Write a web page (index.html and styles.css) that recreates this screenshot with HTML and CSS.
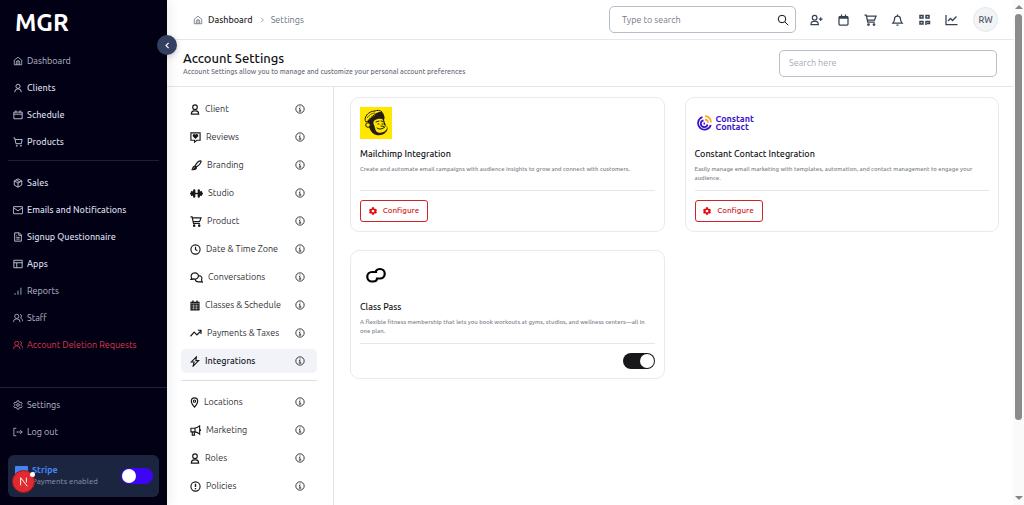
FILE: index.html
```html
<!DOCTYPE html>
<html lang="en">
<head>
<meta charset="utf-8">
<meta name="viewport" content="width=device-width, initial-scale=1">
<title>Account Settings</title>
<link rel="stylesheet" href="styles.css">
</head>
<body>
<svg class="sprite" aria-hidden="true">
  <defs>
    <symbol id="home" viewBox="0 0 24 24"><path d="M3 10l9-7 9 7v11H3zM8 21v-6a4 4 0 0 1 8 0v6M12 12v9"/></symbol>
    <symbol id="person" viewBox="0 0 24 24"><circle cx="12" cy="8" r="5"/><path d="M20 22a8 8 0 0 0-16 0"/></symbol>
    <symbol id="cal" viewBox="0 0 24 24"><path d="M2 5h20v16H2zM2 10h20M7 1v5M17 1v5"/></symbol>
    <symbol id="cart" viewBox="0 0 24 24"><circle cx="9" cy="21" r="1.3"/><circle cx="19" cy="21" r="1.3"/><path d="M1 2h3l3 14h13l2-10H5"/></symbol>
    <symbol id="box" viewBox="0 0 24 24"><path d="M12 2l9 5v10l-9 5-9-5V7zM3 7l9 5 9-5M12 12v10M7.500 4.500l9 5"/></symbol>
    <symbol id="mail" viewBox="0 0 24 24"><rect x="1" y="4" width="22" height="17" rx="1"/><path d="M2 7l10 7 10-7"/></symbol>
    <symbol id="doc" viewBox="0 0 24 24"><path d="M4 2h11l5 5v15H4zM14 2v6h6M8 9h2M8 13h8M8 17h8"/></symbol>
    <symbol id="layout" viewBox="0 0 24 24"><path d="M2 3h20v18H2zM2 9h20M9 9v12"/></symbol>
    <symbol id="bars" viewBox="0 0 24 24"><path d="M5 21v-4M12 21V11M19 21V4"/></symbol>
    <symbol id="people" viewBox="0 0 24 24"><circle cx="9" cy="8" r="5"/><path d="M1 22a8 8 0 0 1 16 0M17 3a5 5 0 0 1 1 9c3 1 5 4 5 8"/></symbol>
    <symbol id="gear" viewBox="0 0 24 24"><path d="M10 2h4l.8 3 2 1.200 3-.9 2 3.500-2.200 2.200v2l2.200 2.200-2 3.500-3-.9-2 1.200-.8 3h-4l-.8-3-2-1.200-3 .9-2-3.500L4.400 13v-2L2.200 8.800l2-3.500 3 .9 2-1.200z"/><circle cx="12" cy="12" r="3.200"/></symbol>
    <symbol id="logout" viewBox="0 0 24 24"><path d="M8 3H2v18h6M8 12h14M17 7l5 5-5 5"/></symbol>
    <symbol id="chevron-left" viewBox="0 0 24 24"><path d="M15 5l-7 7 7 7"/></symbol>
    <symbol id="chevron-right" viewBox="0 0 24 24"><path d="M9 5l7 7-7 7"/></symbol>
    <symbol id="search" viewBox="0 0 24 24"><circle cx="10" cy="10" r="7.500"/><path d="M16 16l6.500 6.500"/></symbol>
    <symbol id="info" viewBox="0 0 24 24"><circle cx="12" cy="12" r="10"/><path d="M9.500 11H12v6M9 17h6M12 6v2.500"/></symbol>
    <symbol id="user-plus" viewBox="0 0 28 24"><circle cx="10" cy="7" r="5"/><path d="M2 22c0-5 3-7 6-7h4c3 0 6 2 6 7zM23 6v8M19 10h8"/></symbol>
    <symbol id="calendar-o" viewBox="0 0 24 24"><rect x="3" y="5" width="18" height="17" rx="2"/><path d="M3 7h18" stroke-width="5"/><path d="M8 1v4M16 1v4"/></symbol>
    <symbol id="fa-cart" viewBox="0 0 26 24"><path d="M1 2h3.500l3 14h14M5 4h19l-3 8H7"/><circle cx="9" cy="21" r="1.500"/><circle cx="20" cy="21" r="1.500"/></symbol>
    <symbol id="bell" viewBox="0 0 24 24"><path d="M12 1v3M3 18c2-2 3-4 3-8a6 6 0 0 1 12 0c0 4 1 6 3 8zM10 22h4"/></symbol>
    <symbol id="qr" viewBox="0 0 24 24"><path stroke-width="3" d="M3 3h6v5H3zM15 3h6v5h-6zM3 15h6v5H3zM15 22v-7h7v4h-5"/></symbol>
    <symbol id="chart" viewBox="0 0 26 24"><path d="M2 2v19h23M6 14l5-5 4 4 8-8"/></symbol>
    <symbol id="fa-user" viewBox="0 0 20 24"><circle cx="10" cy="7" r="5"/><path d="M2 22c0-5 3-7 6-7h4c3 0 6 2 6 7z"/></symbol>
    <symbol id="review" viewBox="0 0 24 24"><path d="M2 2h20v16h-7l-5 4v-4H2z"/><path class="solid" d="M12 15L6 9c-1-4 4-6 6-3 2-3 7-1 6 3z"/></symbol>
    <symbol id="brush" viewBox="0 0 24 24"><path d="M10 13C14 5 19 2 22 2s0 8-9 13z"/><path class="solid" d="M10 12l4 4c1 5-5 8-13 6 4-2 1-9 9-10z"/><path class="hole" d="M5 20c3-1 2-5 5-5"/></symbol>
    <symbol id="dumbbell" viewBox="0 0 28 24"><path stroke-width="5" stroke-linecap="round" d="M9 5v14M19 5v14M4 9v6M24 9v6"/><path stroke-width="3" d="M0 12h28"/></symbol>
    <symbol id="clock" viewBox="0 0 24 24"><circle cx="12" cy="12" r="10"/><path d="M12 6v6l4 3"/></symbol>
    <symbol id="chat" viewBox="0 0 28 24"><path d="M2 16c1-1 2-2 1-4C1 7 4 2 10 2s9 4 8 8-6 7-11 5c-2 1-3 1-5 1zM19 8c6 0 8 5 6 9 0 2 1 4 2 5-2 0-4 0-5-1-5 1-10 0-11-5"/></symbol>
    <symbol id="cal-grid" viewBox="0 0 20 24"><path class="solid" d="M0 4h20v19H0zM4 1h3v4H4zM13 1h3v4h-3z"/><path class="hole" d="M1 8h18M2 13h16M2 18h16M7 10v11M13 10v11"/></symbol>
    <symbol id="trend" viewBox="0 0 26 24"><path d="M1 18l8-9 6 6 9-9M17 5h7v8"/></symbol>
    <symbol id="bolt" viewBox="0 0 20 24"><path d="M13 2L2 13h6l-2 9 12-12h-6z"/></symbol>
    <symbol id="pin" viewBox="0 0 18 24"><path d="M9 22C4 16 2 13 2 9a7 7 0 0 1 14 0c0 4-2 7-7 13z"/><circle cx="9" cy="9" r="2.500"/></symbol>
    <symbol id="horn" viewBox="0 0 24 24"><path d="M21 2v18c-4-4-7-5-12-5H2V7h7c5 0 8-1 12-5zM11 7v8M5 15v7h5l-1-7M23 9v4"/></symbol>
    <symbol id="policy" viewBox="0 0 24 24"><circle cx="12" cy="12" r="10"/><path stroke-width="3" d="M12 6v7M12 15v3"/></symbol>
    <symbol id="cog-solid" viewBox="0 0 24 24"><path class="solid" fill-rule="evenodd" d="M9 1h6l1 4 1.500 1L21 5l3 5-3 2.500L24 15l-3 5-4-1-1 .8-1 3.200H9l-1-3.200L7 19l-4 1-3-5 3-2.500L0 10l3-5 3.500 1L8 5zM12 8a4 4 0 1 0 .01 0z"/></symbol>
  </defs>
</svg>

<div class="app">
  <aside class="sidebar">
    <div class="brand">MGR</div>
    <nav class="menu" aria-label="Primary">
      <a href="#"><svg class="icon"><use href="#home"/></svg>Dashboard</a>
      <a href="#" class="strong"><svg class="icon"><use href="#person"/></svg>Clients</a>
      <a href="#" class="strong"><svg class="icon"><use href="#cal"/></svg>Schedule</a>
      <a href="#" class="strong"><svg class="icon"><use href="#cart"/></svg>Products</a>
    </nav>
    <nav class="menu menu-second" aria-label="Business">
      <a href="#" class="strong"><svg class="icon"><use href="#box"/></svg>Sales</a>
      <a href="#" class="strong"><svg class="icon"><use href="#mail"/></svg>Emails and Notifications</a>
      <a href="#" class="strong"><svg class="icon"><use href="#doc"/></svg>Signup Questionnaire</a>
      <a href="#" class="strong"><svg class="icon"><use href="#layout"/></svg>Apps</a>
      <a href="#"><svg class="icon"><use href="#bars"/></svg>Reports</a>
      <a href="#"><svg class="icon"><use href="#people"/></svg>Staff</a>
      <a href="#" class="danger"><svg class="icon"><use href="#people"/></svg>Account Deletion Requests</a>
    </nav>
    <nav class="menu menu-foot" aria-label="Account">
      <a href="#"><svg class="icon"><use href="#gear"/></svg>Settings</a>
      <a href="#"><svg class="icon"><use href="#logout"/></svg>Log out</a>
    </nav>
    <div class="stripe">
      <svg class="stripe-logo" viewBox="0 0 13 13"><rect width="13" height="13" rx="1"/></svg>
      <label class="stripe-text" for="stripe-toggle"><b>Stripe</b><span>Payments enabled</span></label>
      <input class="switch switch-blue" type="checkbox" id="stripe-toggle">
      <button class="dev-badge" type="button" aria-label="Developer tools"><svg viewBox="0 0 22 22"><path d="M8 15V7l7 9M14 7v5"/></svg><span class="dot"></span></button>
    </div>
    <button class="collapse" type="button" aria-label="Collapse sidebar"><svg class="icon"><use href="#chevron-left"/></svg></button>
  </aside>

  <div class="page">
    <header class="topbar">
      <nav class="crumbs" aria-label="Breadcrumb">
        <svg class="icon"><use href="#home"/></svg><a href="#">Dashboard</a><svg class="icon sep"><use href="#chevron-right"/></svg><span>Settings</span>
      </nav>
      <form class="search">
        <input type="text" placeholder="Type to search" aria-label="Type to search">
        <button type="button" aria-label="Search"><svg class="icon"><use href="#search"/></svg></button>
      </form>
      <div class="tools">
        <button type="button" aria-label="Add client"><svg class="icon"><use href="#user-plus"/></svg></button>
        <button type="button" aria-label="Calendar"><svg class="icon"><use href="#calendar-o"/></svg></button>
        <button type="button" aria-label="Cart"><svg class="icon"><use href="#fa-cart"/></svg></button>
        <button type="button" aria-label="Notifications"><svg class="icon"><use href="#bell"/></svg></button>
        <button type="button" aria-label="QR code"><svg class="icon"><use href="#qr"/></svg></button>
        <button type="button" aria-label="Reports"><svg class="icon"><use href="#chart"/></svg></button>
      </div>
      <button class="avatar" type="button">RW</button>
    </header>

    <section class="heading">
      <div>
        <h1>Account Settings</h1>
        <p>Account Settings allow you to manage and customize your personal account preferences</p>
      </div>
      <input class="filter" type="text" placeholder="Search here" aria-label="Search here">
    </section>

    <div class="content">
      <nav class="settings" aria-label="Settings">
        <a href="#"><svg class="icon w10"><use href="#fa-user"/></svg>Client<svg class="icon info"><use href="#info"/></svg></a>
        <a href="#"><svg class="icon w11"><use href="#review"/></svg>Reviews<svg class="icon info"><use href="#info"/></svg></a>
        <a href="#"><svg class="icon w12"><use href="#brush"/></svg>Branding<svg class="icon info"><use href="#info"/></svg></a>
        <a href="#"><svg class="icon w13"><use href="#dumbbell"/></svg>Studio<svg class="icon info"><use href="#info"/></svg></a>
        <a href="#"><svg class="icon w12"><use href="#fa-cart"/></svg>Product<svg class="icon info"><use href="#info"/></svg></a>
        <a href="#"><svg class="icon w11"><use href="#clock"/></svg>Date &amp; Time Zone<svg class="icon info"><use href="#info"/></svg></a>
        <a href="#"><svg class="icon w13"><use href="#chat"/></svg>Conversations<svg class="icon info"><use href="#info"/></svg></a>
        <a href="#"><svg class="icon w10"><use href="#cal-grid"/></svg>Classes &amp; Schedule<svg class="icon info"><use href="#info"/></svg></a>
        <a href="#"><svg class="icon w12"><use href="#trend"/></svg>Payments &amp; Taxes<svg class="icon info"><use href="#info"/></svg></a>
        <a href="#" class="active" aria-current="page"><svg class="icon w10"><use href="#bolt"/></svg>Integrations<svg class="icon info"><use href="#info"/></svg></a>
        <hr>
        <a href="#"><svg class="icon w9"><use href="#pin"/></svg>Locations<svg class="icon info"><use href="#info"/></svg></a>
        <a href="#"><svg class="icon w11"><use href="#horn"/></svg>Marketing<svg class="icon info"><use href="#info"/></svg></a>
        <a href="#"><svg class="icon w10"><use href="#fa-user"/></svg>Roles<svg class="icon info"><use href="#info"/></svg></a>
        <a href="#"><svg class="icon w11"><use href="#policy"/></svg>Policies<svg class="icon info"><use href="#info"/></svg></a>
      </nav>

      <main class="cards">
        <article class="card">
          <div class="logo">
            <svg viewBox="0 0 32 32" width="32" height="32" role="img" aria-label="Mailchimp">
              <rect width="32" height="32" rx="1" fill="#ffe700"/>
              <path d="M8 14c3-4 8-7 14-7 3 1 3 4 2 6l2 6c2 1 2 4 0 6-3 4-9 4-12 2-2-1-4-4-5-7-2-1-1-4-1-6z" fill="#241c15"/>
              <path d="M15 13c3-1 6-2 8 0l1 5c3 1 4 3 2 5-2 3-8 4-10 1-1-2-1-4-2-6-1-2-1-4 1-5z" fill="#ffe700"/>
              <path d="M6 15C3 11 8 4 15 4c2-1 5-1 7 1-5 1-11 4-14 9z" fill="#ffe700" stroke="#241c15"/>
              <path d="M15 7c3-2 7-3 8-1 1 1 1 3 0 5-3-2-6-1-9 1z" fill="#241c15"/>
              <path d="M7 11c2-3 5-5 8-5" fill="none" stroke="#241c15" stroke-width=".7"/>
              <circle cx="8" cy="18" r="2.300" fill="#ffe700" stroke="#241c15"/>
              <path d="M16 15l3-1M21 14l2 .5M18 17h1M22 17h1M21 19l3 .5M17 21c3 2 5 1 8-1" fill="none" stroke="#241c15" stroke-linecap="round"/>
            </svg>
          </div>
          <h2>Mailchimp Integration</h2>
          <p>Create and automate email campaigns with audience insights to grow and connect with customers.</p>
          <div class="actions"><button class="configure" type="button"><svg class="icon"><use href="#cog-solid"/></svg>Configure</button></div>
        </article>

        <article class="card">
          <div class="logo constant">
            <svg viewBox="0 0 16 16" width="16" height="16" aria-hidden="true" fill="none" stroke-width="1.800">
              <path stroke="#3b14c9" d="M6.500 2a6.500 6.500 0 1 0 8.300 8M7.500 5.300a3.400 3.400 0 1 0 4 4.200"/>
              <path stroke="#3b14c9" d="M7.500 8.500h1.500"/>
              <path stroke="#ffa51f" d="M9 1.200a6 6 0 0 1 6 6M9 4.700a3 3 0 0 1 3 3"/>
            </svg>
            <span>Constant<br>Contact</span>
          </div>
          <h2>Constant Contact Integration</h2>
          <p>Easily manage email marketing with templates, automation, and contact management to engage your audience.</p>
          <div class="actions"><button class="configure" type="button"><svg class="icon"><use href="#cog-solid"/></svg>Configure</button></div>
        </article>

        <article class="card">
          <div class="logo">
            <svg viewBox="0 0 32 32" width="32" height="32" role="img" aria-label="Class Pass" fill="none" stroke="#000" stroke-width="2.200">
              <path d="M16 11c1-2 3-2 4-2a4.500 4.500 0 0 1 0 9.500h-3c0 2-2 3-4 3h-1a4.500 4.500 0 0 1 0-9.500h4c0-.4-.2-.6 0-1z"/>
            </svg>
          </div>
          <h2><label for="class-pass">Class Pass</label></h2>
          <p>A flexible fitness membership that lets you book workouts at gyms, studios, and wellness centers—all in one plan.</p>
          <div class="actions end"><input class="switch switch-dark" type="checkbox" id="class-pass" checked></div>
        </article>
      </main>
    </div>
  </div>

  <div class="scrollbar" aria-hidden="true"><i class="up"></i><i class="thumb"></i><i class="down"></i></div>
</div>
</body>
</html>
```

FILE: styles.css
```css
* { box-sizing: border-box; }
body {
  margin: 0;
  font-family: Ubuntu, "Noto Sans", sans-serif;
  font-size: 9px;
  line-height: 12px;
  color: #111114;
  background: #fff;
}
h1, h2, p { margin: 0; font-weight: 500; }
a { color: inherit; text-decoration: none; }
button, input { font: inherit; color: inherit; margin: 0; }
button { padding: 0; border: 0; background: none; cursor: pointer; }
.sprite { position: absolute; width: 0; height: 0; }
.icon {
  flex: none;
  width: 10px;
  height: 10px;
  fill: none;
  stroke: currentColor;
  stroke-width: 2;
}
.solid { fill: currentColor; stroke: none; }
.hole { stroke: #fff; stroke-width: 1; }

.app { display: flex; height: 100vh; overflow: hidden; }

.sidebar {
  position: relative;
  z-index: 1;
  flex: none;
  display: flex;
  flex-direction: column;
  width: 167px;
  background: #020014;
  color: #b6bdcc;
  box-shadow: 2px 0 12px rgba(0, 0, 0, .08);
}
.brand {
  padding: 11px 15px 12px;
  font-size: 24px;
  line-height: 24px;
  font-weight: 600;
  color: #fff;
}
.menu { display: flex; flex-direction: column; margin: 0 8px; }
.menu a { display: flex; align-items: center; gap: 4px; height: 27px; padding: 0 5px; }
.menu .strong { font-weight: 500; color: #d5dbe6; }
.menu .danger { color: #dc3a4d; }
.menu-second { margin-top: 5px; padding-top: 8px; border-top: 1px solid #1c2033; }
.menu-foot { margin: auto 0 0; padding: 3px 8px 10px; border-top: 1px solid #1c2440; }
.stripe {
  position: relative;
  display: flex;
  align-items: center;
  gap: 4px;
  height: 42px;
  margin: 0 8px 8px;
  padding: 0 6px 0 7px;
  border-radius: 6px;
  background: #1c2540;
}
.stripe-logo { width: 13px; height: 13px; margin-bottom: 8px; fill: #4285f4; }
.stripe-text { flex: 1; display: flex; flex-direction: column; line-height: 11px; }
.stripe-text b { font-size: 9px; font-weight: 700; color: #4285f4; }
.stripe-text span { font-size: 8px; color: #8b95a9; white-space: nowrap; }
.switch {
  flex: none;
  appearance: none;
  display: flex;
  align-items: center;
  width: 32px;
  height: 16px;
  padding: 1px;
  border-radius: 8px;
}
.switch::before { content: ""; width: 14px; height: 14px; border-radius: 50%; background: #fff; }
.switch:checked { justify-content: flex-end; }
.switch-blue { background: #3c06f5; }
.switch-dark { background: #18181b; }
.dev-badge {
  position: absolute;
  left: 4px;
  top: 15px;
  width: 23px;
  height: 23px;
  border: 1px solid #a3181f;
  border-radius: 50%;
  background: #e02a30;
}
.dev-badge svg { display: block; fill: none; stroke: #fff; stroke-width: 1; }
.dev-badge .dot { position: absolute; top: 1px; right: -1px; width: 5px; height: 5px; border-radius: 50%; background: #fff; }
.collapse {
  position: absolute;
  top: 35px;
  right: -10px;
  display: grid;
  place-items: center;
  width: 20px;
  height: 20px;
  border-radius: 50%;
  background: #334060;
  color: #fff;
  box-shadow: 0 2px 6px rgba(0, 0, 0, .2);
}
.collapse .icon { width: 9px; height: 9px; stroke-width: 3; }

.page { flex: 1; display: flex; flex-direction: column; min-width: 0; }
.topbar {
  display: flex;
  align-items: center;
  height: 40px;
  padding: 0 15px 0 26px;
  border-bottom: 1px solid #e5e7eb;
}
.crumbs { flex: 1; display: flex; align-items: center; gap: 5px; color: #6b7280; }
.crumbs a { font-weight: 500; color: #27272a; }
.crumbs .sep { width: 8px; height: 8px; }
.search {
  display: flex;
  align-items: center;
  width: 187px;
  height: 27px;
  padding: 0 6px 0 12px;
  border: 1px solid #b9bdc9;
  border-radius: 5px;
}
.search input { flex: 1; min-width: 0; padding: 0; border: 0; outline: 0; }
.search input::placeholder { color: #757b87; }
.search button { display: flex; }
.search .icon { width: 12px; height: 12px; }
.tools { display: flex; gap: 14px; margin: 0 15px 0 14px; color: #364152; }
.tools button { display: flex; }
.tools .icon { width: 13px; height: 12px; stroke-width: 2.5; }
.avatar {
  width: 25px;
  height: 25px;
  border: 1px solid #e5e7eb;
  border-radius: 50%;
  background: #f3f4f6;
  color: #4b5563;
  font-weight: 500;
}
.heading {
  display: flex;
  align-items: center;
  justify-content: space-between;
  height: 47px;
  padding: 0 16px;
  border-bottom: 1px solid #e5e7eb;
}
.heading h1 { font-size: 13px; line-height: 16px; }
.heading p { font-size: 7px; line-height: 10px; color: #6b6f7a; }
.filter {
  width: 218px;
  height: 27px;
  padding: 0 9px;
  border: 1px solid #b9bdc9;
  border-radius: 5px;
  outline: 0;
}
.filter::placeholder { color: #a5abb8; }

.content { flex: 1; display: flex; min-height: 0; }
.settings {
  flex: none;
  display: flex;
  flex-direction: column;
  gap: 4px;
  width: 167px;
  padding: 10px 16px 0 14px;
  border-right: 1px solid #dfe3e8;
}
.settings a {
  flex: none;
  display: flex;
  align-items: center;
  gap: 5px;
  height: 24px;
  padding: 0 12px 0 9px;
  border-radius: 5px;
  color: #303036;
}
.settings .active { background: #f1f3f8; font-weight: 500; color: #18181b; }
.settings hr { flex: none; width: 100%; height: 1px; margin: 3px 0 5px; border: 0; background: #d9dce1; }
.settings .icon { height: 11px; color: #18181b; stroke-width: 2.5; }
.settings .w9 { width: 9px; }
.settings .w10 { width: 10px; }
.settings .w11 { width: 11px; }
.settings .w12 { width: 12px; }
.settings .w13 { width: 13px; }
.settings .info { width: 10px; height: 10px; margin-left: auto; stroke-width: 2; }

.cards {
  flex: 1;
  display: grid;
  grid-template-columns: repeat(2, minmax(0, 1fr));
  align-content: start;
  align-items: start;
  gap: 18px 20px;
  padding: 10px 14px 10px 16px;
}
.card { padding: 9px; border: 1px solid #e9eaec; border-radius: 9px; }
.logo { display: flex; align-items: center; height: 32px; }
.card h2 { margin-top: 9px; font-size: 9px; line-height: 12px; }
.card p { min-height: 18px; margin-top: 4px; font-size: 6px; line-height: 9px; color: #7b7f89; }
.actions { display: flex; margin-top: 8px; padding-top: 9px; border-top: 1px solid #e5e7eb; }
.end { justify-content: flex-end; }
.configure {
  display: flex;
  align-items: center;
  justify-content: center;
  gap: 6px;
  width: 68px;
  height: 22px;
  border: 1px solid #cf2328;
  border-radius: 3px;
  color: #cf2328;
  font-size: 8px;
  font-weight: 500;
}
.configure .icon { width: 8px; height: 8px; color: #e5070d; }
.constant { gap: 4px; padding-left: 1px; color: #3b14c9; font-size: 9px; line-height: 8px; font-weight: 600; }

.scrollbar {
  flex: none;
  display: flex;
  flex-direction: column;
  align-items: center;
  width: 11px;
  padding: 5px 0;
  background: #fafafa;
}
.scrollbar .up { border: 4px solid transparent; border-top: 0; border-bottom: 4px solid #858585; }
.scrollbar .thumb { flex: 1; width: 7px; max-height: 82%; margin-top: 5px; border-radius: 4px; background: #8b8b8b; }
.scrollbar .down { margin-top: auto; border: 4px solid transparent; border-bottom: 0; border-top: 4px solid #858585; }
```
